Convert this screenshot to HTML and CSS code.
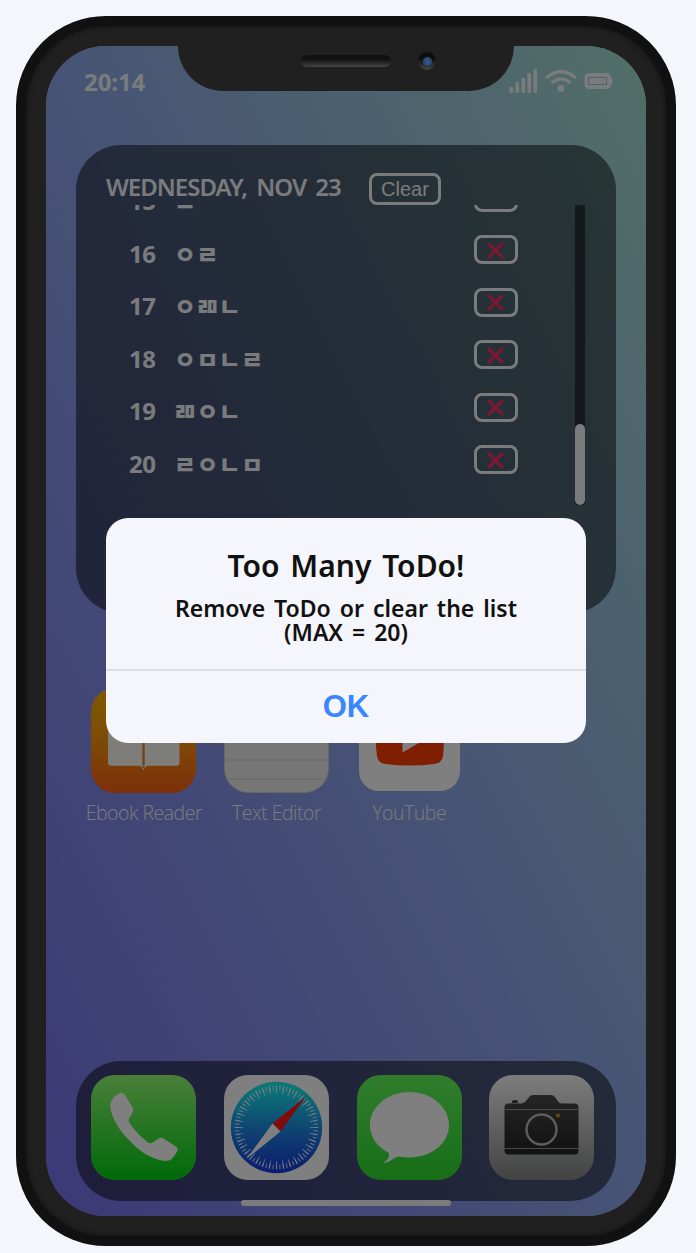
FILE: index.html
```html
<!DOCTYPE html>
<html lang="en">
<head>
<meta charset="utf-8">
<title>Phone</title>
<link rel="stylesheet" href="styles.css">
</head>
<body>
<div class="phone">
  <div class="screen">
    <header class="status">
      <span class="time">20:14</span>
      <svg class="status-icons" width="104" height="26" viewBox="0 0 104 26" fill="#f5f6fa">
        <rect x="0.5" y="19" width="3.6" height="6" rx="1"/><rect x="6.5" y="14.3" width="3.6" height="10.7" rx="1"/><rect x="12.5" y="10" width="3.6" height="15" rx="1"/><rect x="18.5" y="5.3" width="3.6" height="19.7" rx="1"/><rect x="24.5" y="1" width="3.6" height="24" rx="1"/>
        <g fill="none" stroke="#f5f6fa" stroke-width="3.2" stroke-linecap="round"><path d="M38 9.3Q52 -1.8 66 9.3"/><path d="M43.5 14.3Q52 7.3 60.5 14.3"/></g>
        <circle cx="52" cy="20.5" r="3.4"/>
        <rect x="75.5" y="5" width="26.500" height="16" rx="4.500"/>
        <path d="M101 9.500q2.500.3 2.500 2.500v2q0 2.200-2.500 2.500z"/>
        <rect x="79.500" y="9.500" width="18" height="7" fill="none" stroke="#9cc8d4" stroke-width="1"/>
      </svg>
    </header>

    <section class="widget">
      <div class="widget-head"><h2>WEDNESDAY, NOV 23</h2><button class="clear">Clear</button></div>
      <div class="list">
        <ul class="rows">
          <li><b>15</b><span>ㄹ</span><button class="del"><svg viewBox="0 0 16 16"><path d="M2 2l12 12M14 2L2 14"/></svg></button></li>
          <li><b>16</b><span>ㅇㄹ</span><button class="del"><svg viewBox="0 0 16 16"><path d="M2 2l12 12M14 2L2 14"/></svg></button></li>
          <li><b>17</b><span>ㅇㄻㄴ</span><button class="del"><svg viewBox="0 0 16 16"><path d="M2 2l12 12M14 2L2 14"/></svg></button></li>
          <li><b>18</b><span>ㅇㅁㄴㄹ</span><button class="del"><svg viewBox="0 0 16 16"><path d="M2 2l12 12M14 2L2 14"/></svg></button></li>
          <li><b>19</b><span>ㄻㅇㄴ</span><button class="del"><svg viewBox="0 0 16 16"><path d="M2 2l12 12M14 2L2 14"/></svg></button></li>
          <li><b>20</b><span>ㄹㅇㄴㅁ</span><button class="del"><svg viewBox="0 0 16 16"><path d="M2 2l12 12M14 2L2 14"/></svg></button></li>
        </ul>
        <div class="track"><div class="thumb"></div></div>
      </div>
    </section>

    <section class="apps">
      <div class="app">
        <svg class="icon" viewBox="0 0 105 105">
          <defs><linearGradient id="book" x2="0" y2="1"><stop offset="0" stop-color="#ffb300"/><stop offset=".45" stop-color="#fb9a0a"/><stop offset="1" stop-color="#fa5f16"/></linearGradient></defs>
          <rect width="105" height="105" rx="24" fill="url(#book)"/>
          <path d="M17 30q18-8 34.500 0v49q-1-1.200-3-1.200H20q-3 0-3-3zM53.500 30q18-8 35 0v44.800q0 3-3 3H57q-2.500 0-3.500 1.200z" fill="#fffaf2"/>
          <path d="M48 77.500q3 .5 4.500 5 1.500-4.500 4.500-5l-3.700-.5h-1.600z" fill="#fffaf2"/>
          <path d="M52.500 30v50" stroke="#e08a3c" stroke-width="1.800"/>
        </svg>
        <span>Ebook Reader</span>
      </div>
      <div class="app">
        <svg class="icon" viewBox="0 0 105 105">
          <rect x=".5" y=".5" width="104" height="104" rx="24" fill="#ededed" stroke="#cfcfcf"/>
          <path d="M1 52.500h103M1 72h103M2 91h101" stroke="#cfcfcf"/>
        </svg>
        <span>Text Editor</span>
      </div>
      <div class="app">
        <svg class="icon" viewBox="0 0 105 105">
          <rect x="2" y="2" width="101" height="101" rx="20" fill="#fff"/>
          <path d="M19 40q1-9 10-10 24-3 47 0 9 1 10 10 1.500 14 0 28-1 7-9 8-24 3-49 0-7-1-8-8-2-14-1-28z" fill="#ff3d00"/>
          <path d="M45.500 39v25.500L67 52z" fill="#fff"/>
        </svg>
        <span>YouTube</span>
      </div>
    </section>

    <nav class="dock">
      <svg class="icon" viewBox="0 0 105 105">
        <defs><linearGradient id="call" x2="0" y2="1"><stop offset="0" stop-color="#94ff75"/><stop offset="1" stop-color="#00d412"/></linearGradient></defs>
        <rect width="105" height="105" rx="24" fill="url(#call)"/>
        <path d="M26.500 19.500Q31 16.500 34 20L41.500 32.500Q43 35 41.500 37.500L38 43.500Q37 46 38.500 48Q47 60 57 67.500Q59 69 61.500 67.500L67.500 63.800Q70 62 72.500 63.500L85 71.500Q88 74 85.500 77.500L82 82.500Q79.500 86 74 86Q56 84 40 67Q22 50 19 31Q20 23 26.500 19.500z" fill="#fff"/>
      </svg>
      <svg class="icon" viewBox="0 0 105 105">
        <defs><linearGradient id="safari" x2="0" y2="1"><stop offset="0" stop-color="#1bf0ef"/><stop offset=".1" stop-color="#17e3ee"/><stop offset=".55" stop-color="#1d83e2"/><stop offset="1" stop-color="#1737dd"/></linearGradient></defs>
        <rect width="105" height="105" rx="24" fill="#fff"/>
        <circle cx="52.500" cy="52.500" r="45.700" fill="url(#safari)"/>
        <g fill="none" stroke="#fff">
          <circle cx="52.500" cy="52.500" r="39.500" stroke-width="4.500" pathLength="720" stroke-dasharray="3 7" stroke-dashoffset="1.500" opacity=".8"/>
          <circle cx="52.500" cy="52.500" r="37.700" stroke-width="8" pathLength="720" stroke-dasharray="3 17" stroke-dashoffset="1.500" opacity=".8"/>
        </g>
        <path d="M82.500 21L48.500 48.500l8 8z" fill="#ff1717"/>
        <path d="M22.500 84l26-35.500 8 8z" fill="#fff"/>
      </svg>
      <svg class="icon" viewBox="0 0 105 105">
        <defs><linearGradient id="msg" x2="0" y2="1"><stop offset="0" stop-color="#62fa5b"/><stop offset="1" stop-color="#2ddd2d"/></linearGradient></defs>
        <rect width="105" height="105" rx="24" fill="url(#msg)"/>
        <path d="M52.500 17C74 17 92 31.500 92 50S74 82.500 52.500 82.500Q46 82.500 42 81.500Q38 82 34.500 85Q30.500 88 27 88Q26.500 87.500 28.500 86Q32.500 83 32 78C20 72 13 62 13 50C13 31.500 31 17 52.500 17z" fill="#fff"/>
      </svg>
      <svg class="icon" viewBox="0 0 105 105">
        <defs>
          <linearGradient id="cam" x2="0" y2="1"><stop offset="0" stop-color="#fafafa"/><stop offset="1" stop-color="#858688"/></linearGradient>
          <linearGradient id="body" x2="0" y2="1"><stop offset="0" stop-color="#4a4a4a"/><stop offset="1" stop-color="#242424"/></linearGradient>
        </defs>
        <rect width="105" height="105" rx="24" fill="url(#cam)"/>
        <path d="M23 28v-1q0-2 2-2h2q2 0 2 2v1z" fill="#444"/>
        <path d="M19.500 28.500H33Q36 28 38 24.500L40.500 21.500Q42 20 44 20H62Q64.500 20 66 22L69 26.500Q70.500 28.500 73 28.500H85.500Q89.500 28.500 89.500 32.500V75.500Q89.500 79.500 85.500 79.500H19.500Q15.500 79.500 15.500 75.500V32.500Q15.500 28.500 19.500 28.500z" fill="url(#body)"/>
        <path d="M15.500 34.500h74M15.500 73.500h74" stroke="#909090"/>
        <circle cx="52.500" cy="54.500" r="15" fill="none" stroke="#bcbcbc" stroke-width="2.400"/>
        <circle cx="69" cy="40.500" r="1.900" fill="#d79f10"/>
      </svg>
    </nav>
    <div class="home"></div>

    <div class="overlay">
      <div class="alert">
        <div class="alert-text">
          <h1>Too Many ToDo!</h1>
          <p>Remove ToDo or clear the list<br>(MAX = 20)</p>
        </div>
        <button class="ok">OK</button>
      </div>
    </div>
  </div>
  <div class="notch"><i class="speaker"></i><i class="camera"></i></div>
</div>
</body>
</html>
```
FILE: styles.css
```css
* { box-sizing: border-box; }
body {
  margin: 0;
  height: 1253px;
  padding: 16px;
  overflow: hidden;
  background: #f5f6fc;
  font-family: "Noto Sans", "Noto Sans CJK KR", sans-serif;
}
button { margin: 0; padding: 0; background: none; font-family: "Liberation Sans", Arial, sans-serif; }
h1, h2, p, ul { margin: 0; padding: 0; }

.phone {
  position: relative;
  width: 660px;
  height: 1230px;
  padding: 20px;
  border: 10px solid #111;
  border-radius: 90px;
  background: #202020;
  box-shadow: inset 0 0 4px 1px #151515;
}
.screen {
  position: relative;
  display: flex;
  flex-direction: column;
  width: 600px;
  height: 1170px;
  padding: 0 30px;
  border-radius: 60px;
  overflow: hidden;
  background: linear-gradient(to top right, #7872ee, #8ea8ea 50%, #a4ded0);
}

.status {
  display: flex;
  justify-content: space-between;
  height: 99px;
  padding: 22px 3px 0 8px;
  color: #f5f6fa;
}
.time { font-size: 24px; font-weight: 700; line-height: 28px; letter-spacing: -.1px; }

.widget {
  height: 468px;
  flex: none;
  padding: 28px 30px 0;
  border-radius: 45px;
  background: rgba(0, 0, 0, .5);
  color: #f5f6fa;
}
.widget-head { display: flex; gap: 29px; height: 32px; }
.widget-head h2 { width: 234px; font-size: 24px; line-height: 27px; font-weight: 650; white-space: nowrap; letter-spacing: -1px; word-spacing: 4px; }
.clear {
  width: 72px;
  height: 32px;
  border: 3px solid #f5f6fa;
  border-radius: 8px;
  color: #f5f6fa;
  font-size: 20px;
  line-height: 24px;
}
.list { display: flex; justify-content: space-between; width: 479px; height: 300px; overflow: hidden; }
.rows {
  display: flex;
  flex-direction: column;
  justify-content: flex-end;
  padding: 0 0 25px 23px;
  list-style: none;
  font-size: 24px;
}
.rows li { display: flex; flex: none; align-items: flex-start; height: 52.500px; }
.rows b { width: 45px; line-height: 40px; margin-top: 16px; font-weight: 700; letter-spacing: -.6px; }
.rows span { width: 300px; line-height: 40px; margin-top: 16px; font-family: "Noto Sans CJK KR", sans-serif; font-weight: 900; letter-spacing: .3px; }
.del {
  display: flex;
  align-items: center;
  justify-content: center;
  width: 44px;
  height: 29px;
  margin-top: 17.500px;
  border: 3px solid #f5f6fa;
  border-radius: 8px;
}
.del svg { width: 17px; height: 17px; margin: 1px 1px 0 0; fill: none; stroke: #ff2e63; stroke-width: 2.800; stroke-linecap: round; }
.track { display: flex; align-items: flex-end; width: 10px; background: rgba(0, 0, 0, .5); }
.thumb { width: 10px; height: 81px; border-radius: 5px; background: #f5f6fa; }

.apps, .dock { display: grid; grid-template-columns: repeat(4, 132.700px); justify-items: center; padding-left: 1.500px; flex: none; }
.apps { margin-top: 75px; }
.app { display: flex; flex-direction: column; align-items: center; color: #f5f6fa; }
.app span { margin-top: 6px; font-family: "Open Sans", sans-serif; font-size: 19.500px; line-height: 27px; font-weight: 350; white-space: nowrap; letter-spacing: -.5px; }
.icon { display: block; width: 105px; height: 105px; }
.dock { width: 540px; height: 140px; margin-top: auto; padding-top: 14px; border-radius: 45px; background: rgba(0, 0, 0, .5); }
.home { flex: none; align-self: center; width: 210px; height: 6px; margin: -1px 0 10px; border-radius: 3px; background: #f5f6fa; }

.overlay {
  position: absolute;
  inset: 0;
  display: flex;
  align-items: center;
  justify-content: center;
  padding-bottom: 1px;
  background: rgba(0, 0, 0, .5);
}
.alert { width: 480px; height: 225px; border-radius: 22px; background: #f5f6fc; color: #111; text-align: center; }
.alert-text { height: 153px; padding-top: 30px; border-bottom: 2px solid #dcdde1; }
.alert h1 { font-size: 30px; line-height: 36px; font-weight: 600; word-spacing: 3px; }
.alert p { margin-top: 12px; font-size: 23px; line-height: 24px; font-weight: 600; word-spacing: 3px; }
.ok { width: 100%; height: 72px; border: 0; color: #3a86ff; font-size: 31px; font-weight: 700; }

.notch {
  position: absolute;
  top: 20px;
  left: 152px;
  display: flex;
  width: 336px;
  height: 45px;
  padding: 9px 0 0 123px;
  border-radius: 0 0 45px 45px;
  background: #202020;
}
.speaker { width: 90px; height: 12px; border-radius: 6px; background: linear-gradient(#111 35%, #444); }
.camera {
  width: 18px;
  height: 18px;
  margin: -3px 0 0 27px;
  border-radius: 50%;
  background: radial-gradient(circle at 9.500px 9.500px, #345b93 0, #29446e 4.200px, transparent 4.800px), linear-gradient(#0d0d0d 35%, #484848);
}
```
